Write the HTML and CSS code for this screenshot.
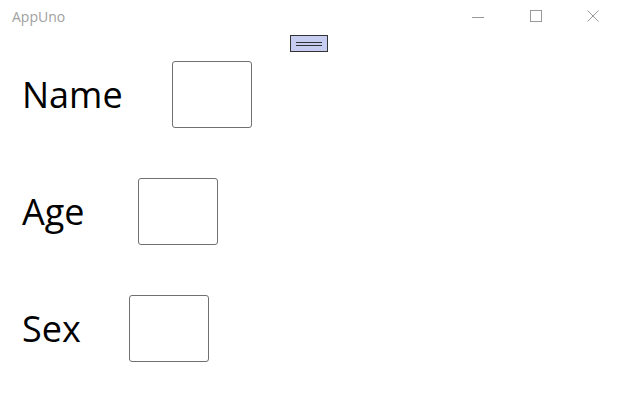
FILE: index.html
```html
<!DOCTYPE html>
<html>
<head>
<meta charset="utf-8">
<link rel="stylesheet" href="styles.css">
</head>
<body>
<div class="window">
  <div class="titlebar">
    <span class="title">AppUno</span>
    <div class="controls">
      <span class="ctl ctl-min">
        <svg width="12" height="12" viewBox="0 0 12 12"><line x1="0" y1="6.5" x2="12" y2="6.5" stroke="#999" stroke-width="1"/></svg>
      </span>
      <span class="ctl ctl-max">
        <svg width="12" height="12" viewBox="0 0 12 12"><rect x="0.5" y="0.5" width="11" height="11" fill="none" stroke="#999" stroke-width="1"/></svg>
      </span>
      <span class="ctl ctl-close">
        <svg width="12" height="12" viewBox="0 0 12 12"><path d="M0.5 0.5 L11.5 11.5 M11.5 0.5 L0.5 11.5" stroke="#999" stroke-width="1"/></svg>
      </span>
    </div>
  </div>
  <div class="toolrow">
    <div class="grip"><span class="grip-lines"></span></div>
  </div>
  <div class="form">
    <div class="row"><span class="label label-name">Name</span><div class="box"></div></div>
    <div class="row"><span class="label label-age">Age</span><div class="box"></div></div>
    <div class="row"><span class="label label-sex">Sex</span><div class="box"></div></div>
  </div>
</div>
</body>
</html>
```
FILE: styles.css
```css
html, body {
  margin: 0;
  padding: 0;
  background: #ffffff;
}
.window {
  width: 622px;
  height: 395px;
  font-family: "Open Sans", "Noto Sans", sans-serif;
  color: #000;
  overflow: hidden;
}
.titlebar {
  height: 32px;
  display: flex;
  align-items: center;
  justify-content: space-between;
}
.title {
  margin-left: 12px;
  font-size: 14px;
  color: #a0a0a0;
}
.controls {
  display: flex;
  height: 32px;
}
.ctl {
  height: 32px;
  display: flex;
  align-items: center;
  justify-content: center;
}
.ctl-min {
  width: 58px;
  padding-top: 1px;
}
.ctl-max {
  width: 57px;
}
.ctl-close {
  width: 58px;
}
.toolrow {
  display: flex;
  justify-content: center;
  padding-top: 3px;
  padding-right: 4px;
}
.grip {
  width: 36px;
  height: 15px;
  background: #c7cdf0;
  border: 1px solid #333;
  display: flex;
  align-items: center;
  justify-content: center;
}
.grip-lines {
  width: 26px;
  height: 2px;
  border-top: 1px solid #333;
  border-bottom: 1px solid #333;
}
.form {
  padding-top: 9px;
  display: flex;
  flex-direction: column;
  gap: 50px;
}
.row {
  display: flex;
  align-items: center;
  height: 67px;
}
.label {
  margin-left: 22px;
  font-size: 36px;
  line-height: 42px;
  white-space: nowrap;
}
.label-name { width: 100px; }
.label-age { width: 66px; }
.label-sex { width: 57px; }
.box {
  margin-left: 50px;
  width: 78px;
  height: 65px;
  border: 1px solid #707070;
  border-radius: 3px;
}
```
